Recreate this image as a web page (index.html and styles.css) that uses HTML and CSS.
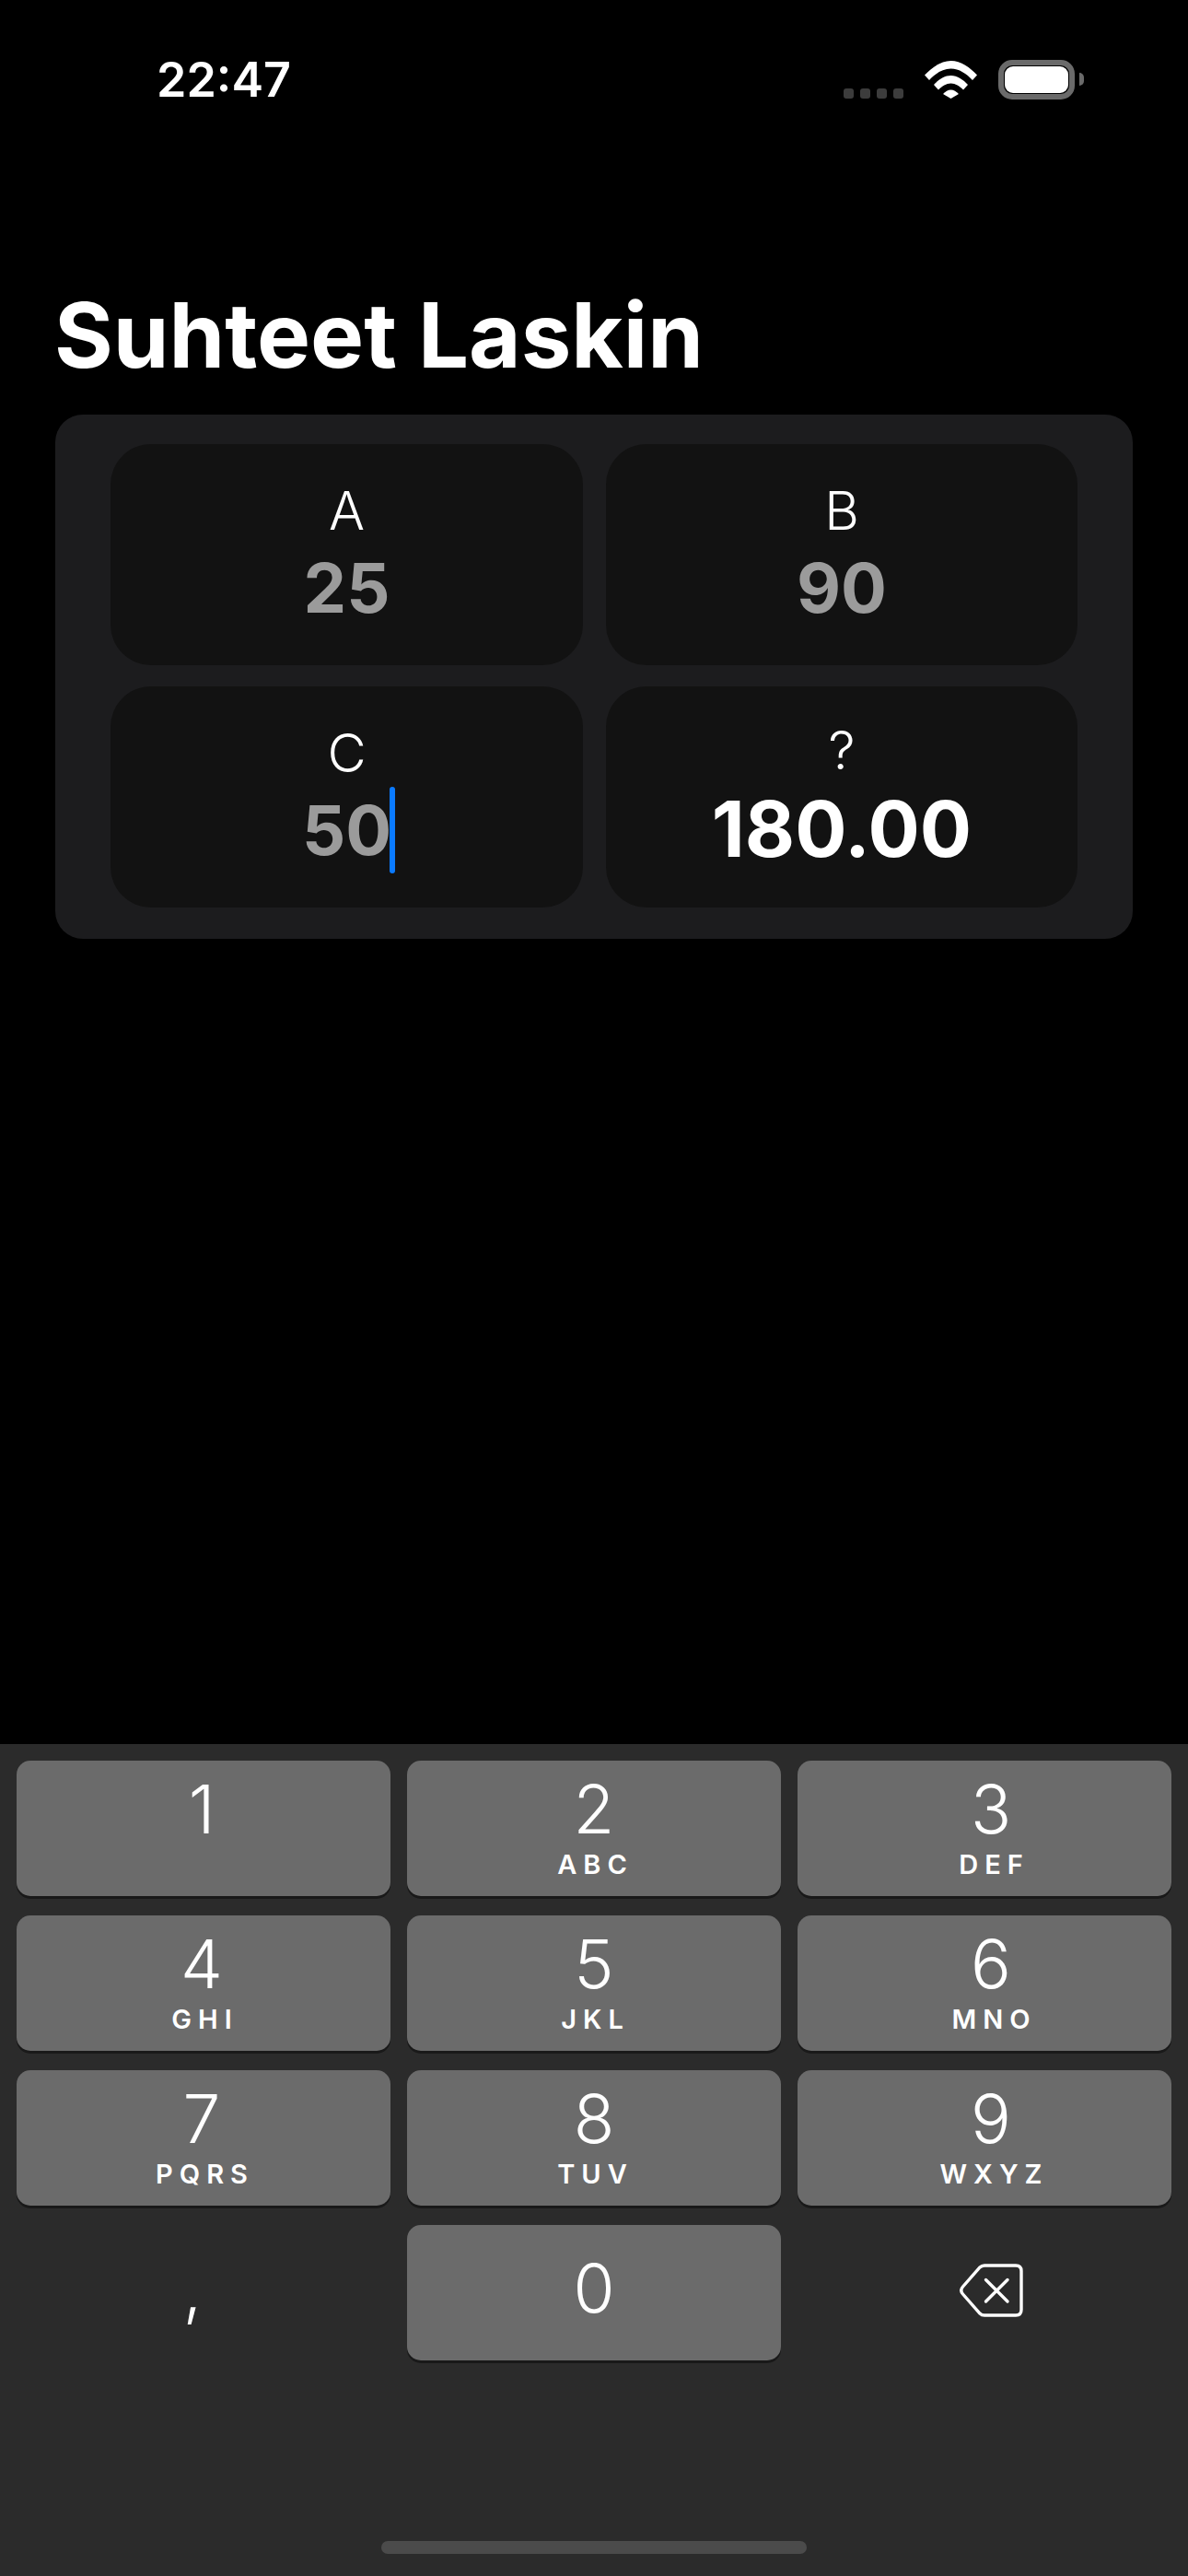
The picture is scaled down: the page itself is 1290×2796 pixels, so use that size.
FILE: index.html
```html
<!DOCTYPE html>
<html lang="en">
<head>
<meta charset="UTF-8">
<meta name="viewport" content="width=device-width, initial-scale=1.0">
<title>Suhteet Laskin</title>
<link rel="stylesheet" href="styles.css">
</head>
<body>

<div class="status-bar">
    <span class="time">22:47</span>
    <div class="status-icons">
        <div class="signal"><i></i><i></i><i></i><i></i></div>
        <svg class="wifi" width="57" height="41" viewBox="0 0 57 41">
            <path d="M0 15.5C7.5 7.5 17.5 0 28.5 0S49.500 7.500 57 15.500L52 21C45.500 14 37.500 8.500 28.500 8.500S11.500 14 5 21Z" fill="#fff"/>
            <path d="M10 26C15 20.500 21.500 16 28.500 16S42 20.500 47 26L42 31.500C38 27.500 33.500 24.500 28.500 24.500S19 27.500 15 31.500Z" fill="#fff"/>
            <path d="M20 36C22.500 33.500 25.500 31.500 28.500 31.500S34.500 33.500 37 36L28.500 41Z" fill="#fff"/>
        </svg>
        <div class="battery"><div class="battery-fill"></div></div>
        <div class="battery-nub"></div>
    </div>
</div>

<h1 class="title">Suhteet Laskin</h1>

<div class="panel">
    <div class="cell">
        <span class="label">A</span>
        <span class="value">25</span>
    </div>
    <div class="cell">
        <span class="label">B</span>
        <span class="value">90</span>
    </div>
    <div class="cell">
        <span class="label">C</span>
        <span class="value">50<i class="caret"></i></span>
    </div>
    <div class="cell">
        <span class="label label-question">?</span>
        <span class="value result">180.00</span>
    </div>
</div>

<div class="keyboard">
    <div class="keys">
        <div class="key key-left"><span class="digit">1</span></div>
        <div class="key"><span class="digit">2</span><span class="letters">ABC</span></div>
        <div class="key key-right"><span class="digit">3</span><span class="letters">DEF</span></div>
        <div class="key key-left"><span class="digit">4</span><span class="letters">GHI</span></div>
        <div class="key"><span class="digit">5</span><span class="letters">JKL</span></div>
        <div class="key key-right"><span class="digit">6</span><span class="letters">MNO</span></div>
        <div class="key key-left"><span class="digit">7</span><span class="letters">PQRS</span></div>
        <div class="key"><span class="digit">8</span><span class="letters">TUV</span></div>
        <div class="key key-right"><span class="digit">9</span><span class="letters">WXYZ</span></div>
        <div class="key-plain comma">,</div>
        <div class="key key-center"><span class="digit">0</span></div>
        <div class="key-plain key-delete">
            <svg class="backspace" width="69" height="58" viewBox="0 0 69 58">
                <path d="M27 2H61Q67 2 67 8V50Q67 56 61 56H27Q24 56 22 54L3.500 33Q0 29 3.500 25L22 4Q24 2 27 2Z" fill="none" stroke="#fff" stroke-width="3.400"/>
                <path d="M28.500 17.500L52 41M52 17.500L28.500 41" fill="none" stroke="#fff" stroke-width="3.400" stroke-linecap="round"/>
            </svg>
        </div>
    </div>
    <div class="home-indicator"></div>
</div>

</body>
</html>
```

FILE: styles.css
```css
/* Page */
html, body {
    margin: 0;
    padding: 0;
}
body {
    width: 1290px;
    height: 2796px;
    overflow: hidden;
    display: flex;
    flex-direction: column;
    background-color: #000;
    color: #fff;
    font-family: Inter, "Liberation Sans", sans-serif;
}

/* Status bar */
.status-bar {
    display: flex;
    justify-content: space-between;
    align-items: flex-start;
    height: 318px;
    padding: 58px 113px 0 170px;
    box-sizing: border-box;
}
.time {
    font-size: 52px;
    line-height: 58px;
    font-weight: 600;
}
.status-icons {
    display: flex;
    align-items: flex-end;
    padding-top: 7px;
}
.signal {
    display: flex;
    gap: 7px;
    margin-right: 23px;
    margin-bottom: 1px;
}
.signal i {
    width: 11px;
    height: 11px;
    border-radius: 3px;
    background-color: #3c3c3c;
}
.wifi {
    margin-right: 23px;
    margin-bottom: 1px;
}
.battery {
    display: flex;
    width: 83px;
    height: 43px;
    padding: 1px;
    box-sizing: border-box;
    border: 6px solid #6a6a6a;
    border-radius: 15px;
}
.battery-fill {
    flex: 1;
    border-radius: 9px;
    background-color: #fff;
}
.battery-nub {
    width: 5px;
    height: 14px;
    margin: 0 0 15px 5px;
    border-radius: 0 5px 5px 0;
    background-color: #6a6a6a;
}

/* Title */
.title {
    margin: 0;
    height: 132px;
    padding-left: 59px;
    font-size: 97.5px;
    line-height: 92px;
    font-weight: 700;
}

/* Ratio panel */
.panel {
    display: grid;
    grid-template-columns: 513px 512px;
    grid-auto-rows: 240px;
    gap: 23px 25px;
    width: 1170px;
    margin-left: 60px;
    padding: 32px 60px 34px;
    box-sizing: border-box;
    border-radius: 30px;
    background-color: #1c1c1e;
}
.cell {
    display: flex;
    flex-direction: column;
    align-items: center;
    padding-top: 37px;
    box-sizing: border-box;
    border-radius: 44px;
    background-color: #121212;
}
.label {
    font-size: 58px;
    line-height: 70px;
    font-weight: 350;
}
.label-question {
    margin-top: -3px;
}
.value {
    position: relative;
    margin-top: 7px;
    font-size: 74px;
    line-height: 84px;
    font-weight: 700;
    color: #9b9b9b;
}
.result {
    margin-top: 3px;
    font-size: 83.5px;
    line-height: 96px;
    color: #fff;
}
.caret {
    position: absolute;
    left: 100%;
    top: -5px;
    width: 6px;
    height: 94px;
    margin-left: -2px;
    border-radius: 3px;
    background-color: #0a7aff;
}

/* Keyboard */
.keyboard {
    margin-top: auto;
    height: 903px;
    padding: 18px 18px 0;
    box-sizing: border-box;
    background-color: #2b2b2b;
}
.keys {
    display: grid;
    grid-template-columns: repeat(3, 406px);
    grid-auto-rows: 147px;
    gap: 21px 18px;
}
.key {
    display: flex;
    flex-direction: column;
    align-items: center;
    padding-top: 16px;
    box-sizing: border-box;
    border-radius: 15px;
    background-color: #6b6b6b;
    box-shadow: 0 3px 0 #191919;
}
.key-center {
    padding-top: 32px;
}
.key-plain {
    display: flex;
    justify-content: center;
    align-items: center;
}
.digit {
    font-size: 73px;
    line-height: 73px;
    font-weight: 350;
}
.letters {
    margin-top: 9px;
    padding-left: 3px;
    font-size: 29px;
    line-height: 30px;
    font-weight: 600;
    letter-spacing: 7px;
}
/* the side columns sit a little off the key centre on the real keyboard */
.key-left .digit {
    margin-right: 4px;
}
.key-right {
    padding-left: 14px;
}
.key-right .letters {
    margin-left: 4px;
}
.key-delete {
    padding-left: 14px;
}
.comma {
    padding: 0 24px 8px 0;
    font-size: 73px;
    line-height: 73px;
    font-weight: 300;
}
.backspace {
    margin-top: -6px;
}
.home-indicator {
    width: 462px;
    height: 14px;
    margin: 196px auto 0;
    border-radius: 7px;
    background-color: #4b4b4b;
}
```
